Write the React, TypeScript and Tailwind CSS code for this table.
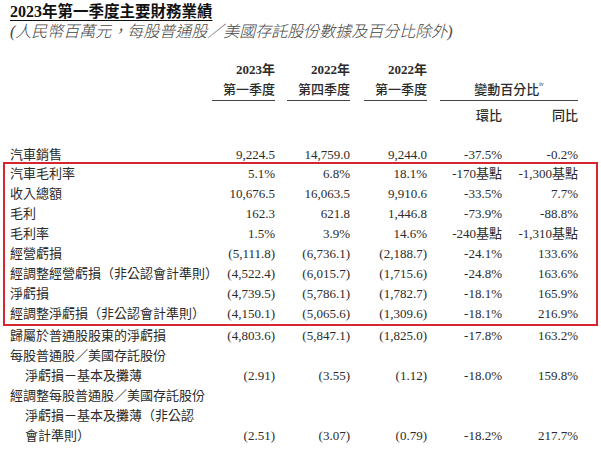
import React from 'react';

type Row = {
  label: string;
  indent?: boolean;
  values?: string[];
};

const topRow: Row = { label: '汽車銷售', values: ['9,224.5', '14,759.0', '9,244.0', '-37.5%', '-0.2%'] };

const boxedRows: Row[] = [
  { label: '汽車毛利率', values: ['5.1%', '6.8%', '18.1%', '-170基點', '-1,300基點'] },
  { label: '收入總額', values: ['10,676.5', '16,063.5', '9,910.6', '-33.5%', '7.7%'] },
  { label: '毛利', values: ['162.3', '621.8', '1,446.8', '-73.9%', '-88.8%'] },
  { label: '毛利率', values: ['1.5%', '3.9%', '14.6%', '-240基點', '-1,310基點'] },
  { label: '經營虧損', values: ['(5,111.8)', '(6,736.1)', '(2,188.7)', '-24.1%', '133.6%'] },
  { label: '經調整經營虧損（非公認會計準則）', values: ['(4,522.4)', '(6,015.7)', '(1,715.6)', '-24.8%', '163.6%'] },
  { label: '淨虧損', values: ['(4,739.5)', '(5,786.1)', '(1,782.7)', '-18.1%', '165.9%'] },
  { label: '經調整淨虧損（非公認會計準則）', values: ['(4,150.1)', '(5,065.6)', '(1,309.6)', '-18.1%', '216.9%'] },
];

const bottomRows: Row[] = [
  { label: '歸屬於普通股股東的淨虧損', values: ['(4,803.6)', '(5,847.1)', '(1,825.0)', '-17.8%', '163.2%'] },
  { label: '每股普通股／美國存託股份' },
  { label: '淨虧損－基本及攤薄', indent: true, values: ['(2.91)', '(3.55)', '(1.12)', '-18.0%', '159.8%'] },
  { label: '經調整每股普通股／美國存託股份' },
  { label: '淨虧損－基本及攤薄（非公認', indent: true },
  { label: '會計準則）', indent: true, values: ['(2.51)', '(3.07)', '(0.79)', '-18.2%', '217.7%'] },
];

const grid = 'grid grid-cols-[minmax(0,1fr)_75px_75px_77px_75px_76px]';

const DataRow: React.FC<{ row: Row; className?: string }> = ({ row, className }) => (
  <div className={`${grid} h-[20px] leading-[20px] ${className ?? ''}`}>
    <div className={`whitespace-nowrap ${row.indent ? 'pl-[15px]' : ''}`}>{row.label}</div>
    {(row.values ?? ['', '', '', '', '']).map((v, i) => (
      <div key={i} className="text-right whitespace-nowrap">
        {v}
      </div>
    ))}
  </div>
);

const HeadCell: React.FC<{ year: string; quarter: string }> = ({ year, quarter }) => (
  <div className="flex flex-col items-end">
    <div className="h-[20px] leading-[20px] font-bold">{year}</div>
    <div className="h-[21px] w-[63px] border-b border-[#444] text-right leading-[20px] font-medium">{quarter}</div>
  </div>
);

export default function App() {
  return (
    <div className="w-[601px] h-[452px] bg-white overflow-hidden text-[13px] text-[#2b2b2b] font-['Liberation_Serif','Noto_Sans_CJK_TC',serif]">
      <div className="pl-[10px] pt-[2px]">
        <div className="h-[20px] leading-[20px] text-[15.5px] font-bold text-[#111] underline underline-offset-[3px] decoration-[1px] w-fit">
          <span className="text-[16px]">2023</span>年第一季度主要財務業績
        </div>
        <div className="h-[20px] leading-[20px] text-[16px] italic font-light text-[#444] whitespace-nowrap">
          (人民幣百萬元，每股普通股／美國存託股份數據及百分比除外)
        </div>
      </div>

      <div className="pl-[10px] w-[578px] mt-[18px]">
        {/* header */}
        <div className={grid}>
          <div />
          <HeadCell year="2023年" quarter="第一季度" />
          <HeadCell year="2022年" quarter="第四季度" />
          <HeadCell year="2022年" quarter="第一季度" />
          <div className="col-span-2 flex flex-col">
            <div className="h-[20px]" />
            <div className="ml-[13px] h-[21px] border-b border-[#444] text-center leading-[20px] font-medium">
              變動百分比<sup className="text-[6px] align-super">iv</sup>
            </div>
          </div>
        </div>
        <div className={`${grid} mt-[5px] h-[20px] leading-[20px] font-medium`}>
          <div />
          <div />
          <div />
          <div />
          <div className="text-right">環比</div>
          <div className="text-right">同比</div>
        </div>

        <div className="mt-[19px]">
          <DataRow row={topRow} className="!h-[17px]" />
        </div>

        <div className="-ml-[7px] -mr-[20px] pl-[5px] pr-[18px] border-2 border-[#d7262f]">
          {boxedRows.map((r) => (
            <DataRow key={r.label} row={r} />
          ))}
        </div>

        {bottomRows.map((r) => (
          <DataRow key={r.label} row={r} />
        ))}
      </div>
    </div>
  );
}
